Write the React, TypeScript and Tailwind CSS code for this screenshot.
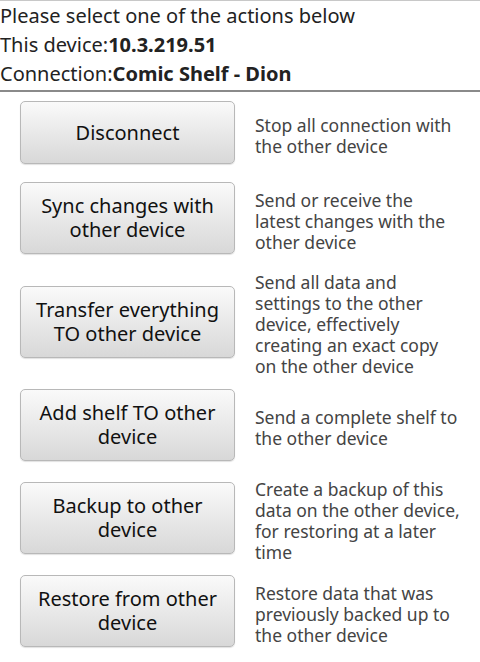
import React from "react";

type Action = {
  label: string;
  lines: string[];
};

const actions: Action[] = [
  { label: "Disconnect", lines: ["Stop all connection with", "the other device"] },
  {
    label: "Sync changes with other device",
    lines: ["Send or receive the", "latest changes with the", "other device"],
  },
  {
    label: "Transfer everything TO other device",
    lines: [
      "Send all data and",
      "settings to the other",
      "device, effectively",
      "creating an exact copy",
      "on the other device",
    ],
  },
  { label: "Add shelf TO other device", lines: ["Send a complete shelf to", "the other device"] },
  {
    label: "Backup to other device",
    lines: ["Create a backup of this", "data on the other device,", "for restoring at a later", "time"],
  },
  {
    label: "Restore from other device",
    lines: ["Restore data that was", "previously backed up to", "the other device"],
  },
];

const ActionRow = ({ action }: { action: Action }) => {
  const singleLine = action.label.length < 14;
  return (
    <div className="flex items-center">
      <div className="my-[9px] ml-[20px] w-[215px] shrink-0">
        <button
          className={`flex w-full items-center justify-center rounded-[5px] border border-[#b8b8b8] bg-gradient-to-b from-[#fafafa] to-[#d8d8d8] px-3 text-center text-[20px] leading-[24px] text-[#111] shadow-[0_1px_1px_rgba(0,0,0,0.12)] ${
            singleLine ? "h-[63px]" : "h-[72px]"
          }`}
        >
          {action.label}
        </button>
      </div>
      <p className="ml-[20px] pt-[9px] pb-[3px] text-[17.5px] leading-[21px] text-[#444]">
        {action.lines.map((l) => (
          <span key={l} className="block whitespace-nowrap">
            {l}
          </span>
        ))}
      </p>
    </div>
  );
};

const App = () => {
  return (
    <div
      className="min-h-[662px] w-[480px] overflow-hidden border-t border-[#c8c8c8] bg-white"
      style={{ fontFamily: '"Noto Sans", "Open Sans", sans-serif' }}
    >
      {/* Connection summary */}
      <div className="text-[20px] leading-[29px] text-[#222]">
        <div>Please select one of the actions below</div>
        <div>
          This device:<span className="font-bold">10.3.219.51</span>
        </div>
        <div>
          Connection:<span className="font-bold">Comic Shelf - Dion</span>
        </div>
      </div>
      <div className="mt-[2px] h-[2px] bg-[#8a8a8a]" />

      {/* Action list */}
      <div className="flex flex-col">
        {actions.map((a) => (
          <ActionRow key={a.label} action={a} />
        ))}
      </div>
    </div>
  );
};

export default App;
